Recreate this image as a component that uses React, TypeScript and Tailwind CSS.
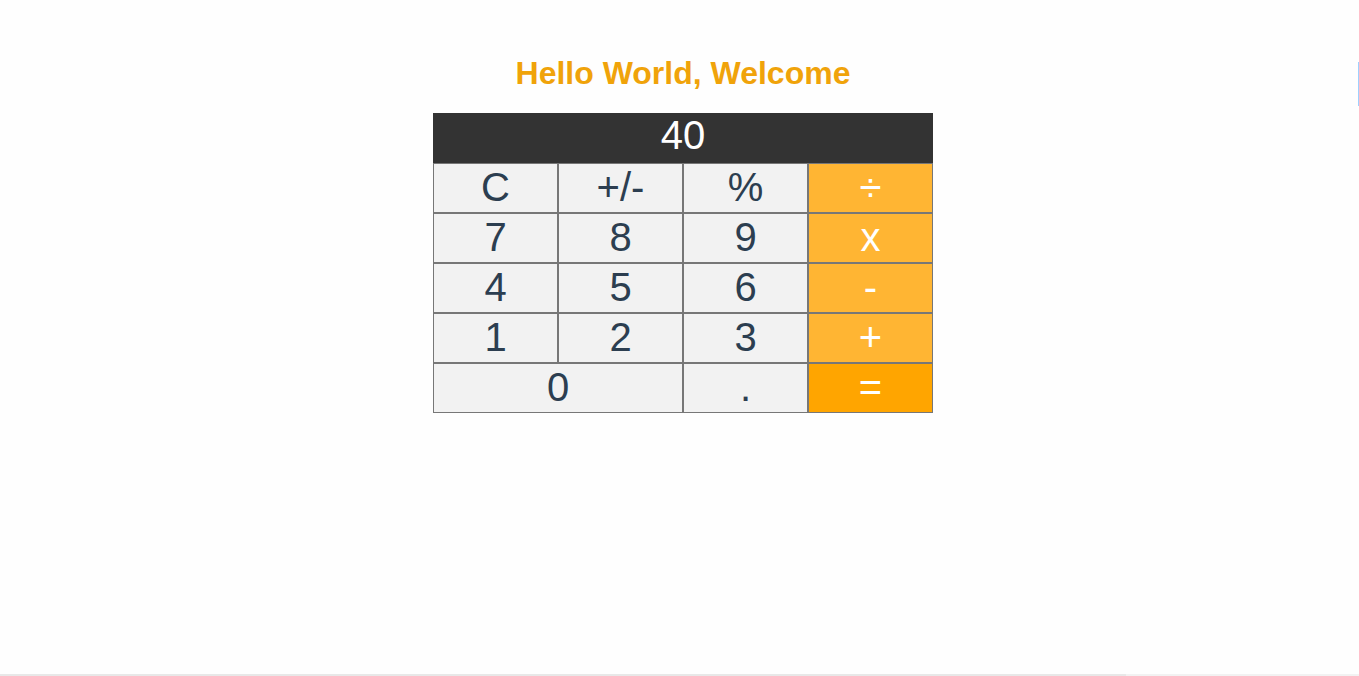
import React from "react";

const keys: { label: string; kind: "num" | "op" | "eq"; span?: boolean }[] = [
  { label: "C", kind: "num" },
  { label: "+/-", kind: "num" },
  { label: "%", kind: "num" },
  { label: "÷", kind: "op" },
  { label: "7", kind: "num" },
  { label: "8", kind: "num" },
  { label: "9", kind: "num" },
  { label: "x", kind: "op" },
  { label: "4", kind: "num" },
  { label: "5", kind: "num" },
  { label: "6", kind: "num" },
  { label: "-", kind: "op" },
  { label: "1", kind: "num" },
  { label: "2", kind: "num" },
  { label: "3", kind: "num" },
  { label: "+", kind: "op" },
  { label: "0", kind: "num", span: true },
  { label: ".", kind: "num" },
  { label: "=", kind: "eq" },
];

export default function App() {
  return (
    <div
      className="relative min-h-[676px] w-full bg-[#fefefe] overflow-hidden"
      style={{ fontFamily: '"Liberation Sans", Arial, sans-serif' }}
    >
      <div className="flex flex-col items-center pl-[7px] pt-[55px]">
        <h1 className="text-[32px] leading-[37px] font-bold text-[#f0a30a] mb-[21px]">
          Hello World, Welcome
        </h1>
        <div className="grid grid-cols-[repeat(4,125px)]">
          <div className="col-span-4 h-[50px] bg-[#333333] text-white text-[40px] flex items-center justify-center pb-[6px]">
            40
          </div>
          {keys.map((k) => (
            <div
              key={k.label}
              className={
                "h-[50px] border border-[#777777] flex items-center justify-center text-[40px] pb-[2px] " +
                (k.span ? "col-span-2 " : "") +
                (k.kind === "num"
                  ? "bg-[#f2f2f2] text-[#2c3e50]"
                  : k.kind === "op"
                  ? "bg-[#ffb533] text-white"
                  : "bg-[#ffa500] text-white")
              }
            >
              {k.label}
            </div>
          ))}
        </div>
      </div>
      <div className="absolute right-0 top-[62px] w-[1px] h-[44px] bg-[#9fd0ff]" />
      <div className="absolute left-0 bottom-0 w-full h-[2px] bg-[#f2f2f2] flex">
        <div className="w-[1126px] h-full bg-[#e8e8e8]" />
      </div>
    </div>
  );
}
